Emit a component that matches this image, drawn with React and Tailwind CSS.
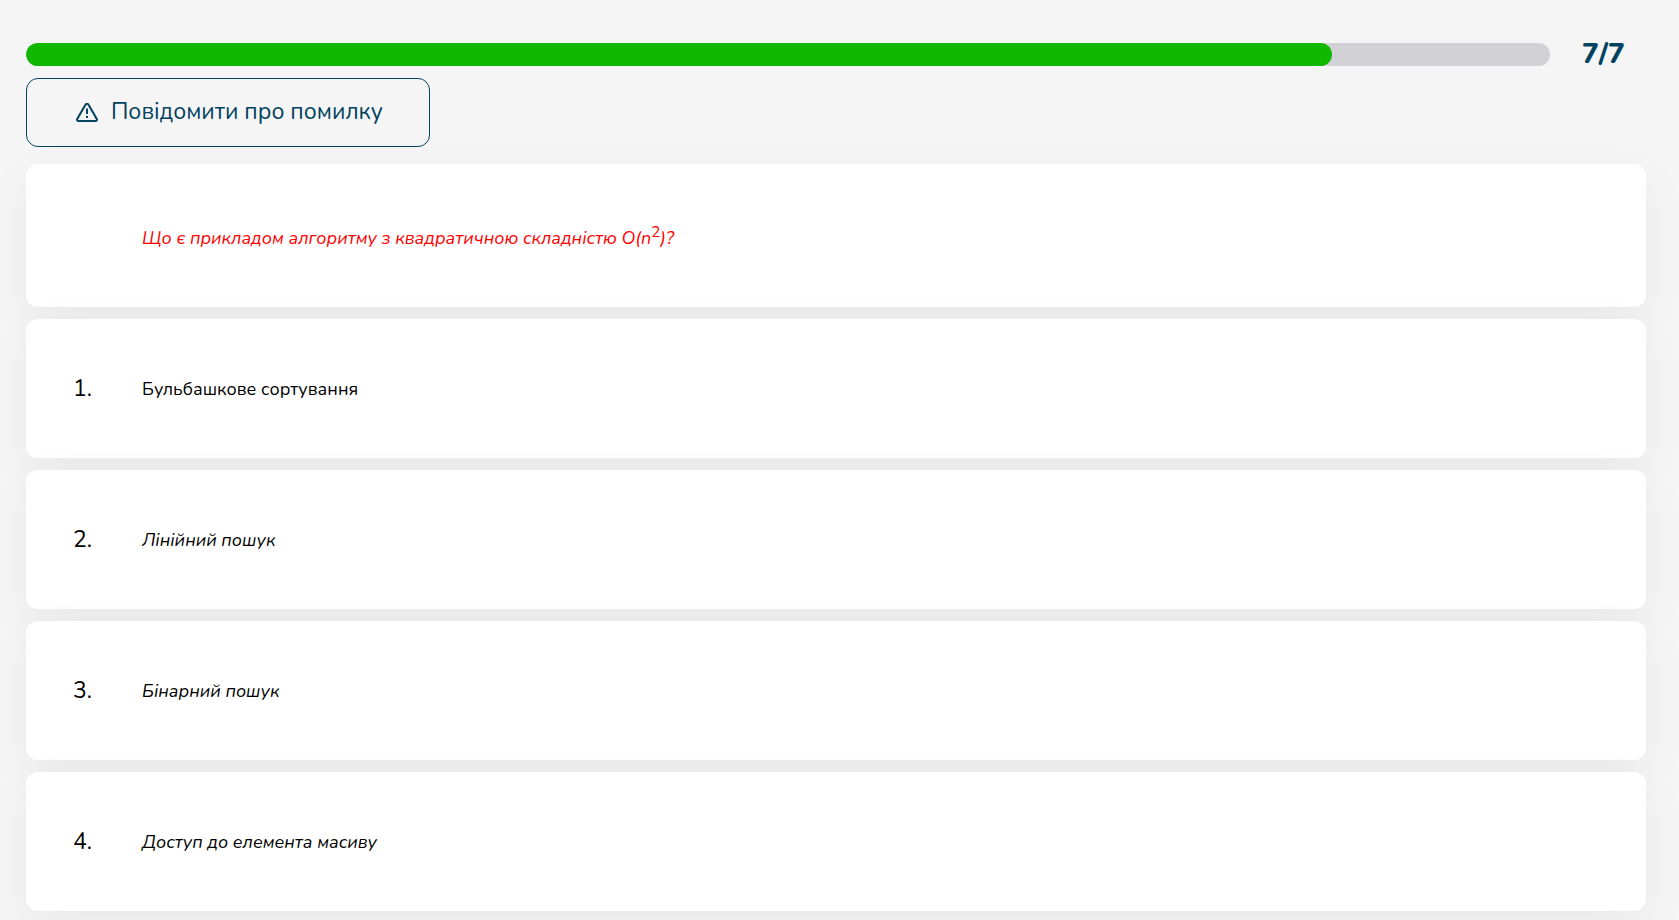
const answers = [
  { text: 'Бульбашкове сортування', italic: false },
  { text: 'Лінійний пошук', italic: true },
  { text: 'Бінарний пошук', italic: true },
  { text: 'Доступ до елемента масиву', italic: true },
];

const current = 7;
const total = 7;
const completed = 6;

function WarningIcon() {
  return (
    <svg
      className="h-5 w-6 shrink-0"
      viewBox="0 0 24 20"
      fill="none"
      stroke="currentColor"
      strokeWidth="2"
      strokeLinejoin="round"
      aria-hidden="true"
    >
      <path d="M10.6 1.6 2.2 15.9a1.4 1.4 0 0 0 1.2 2.1h17.2a1.4 1.4 0 0 0 1.2-2.1L13.4 1.6a1.6 1.6 0 0 0-2.8 0z" />
      <path d="M12 5.5v5.5" />
      <path d="M12 13v2" />
    </svg>
  );
}

function Card({ number, children }) {
  return (
    <div className="flex items-center rounded-xl bg-white py-[55px] pr-12 shadow-[0_15px_50px_rgba(0,0,0,0.05)]">
      <div className="w-[116px] shrink-0 pl-[47px] text-[23px] leading-[27px]">{number}</div>
      <div className="min-w-0 grow text-lg leading-[27px]">{children}</div>
    </div>
  );
}

export default function App() {
  return (
    <main className="min-h-screen overflow-hidden bg-[#f5f5f5] pt-10 pr-[33px] pb-2 pl-[26px] font-['Nunito','Open_Sans',sans-serif] text-black">
      <div className="flex items-center">
        <div
          className="h-[23px] grow overflow-hidden rounded-full bg-[#d2d1d6]"
          role="progressbar"
          aria-label={`${completed}/${total}`}
          aria-valuenow={completed}
          aria-valuemin={0}
          aria-valuemax={total}
        >
          <div
            className="h-full rounded-full bg-[#10b800]"
            style={{ width: `${(completed / total) * 100}%` }}
          />
        </div>
        <div className="w-24 shrink-0 pl-8 text-[28px] leading-7 font-extrabold text-[#00425f]">
          {current}/{total}
        </div>
      </div>

      <button
        type="button"
        className="mt-2.5 flex h-[69px] items-center gap-3 rounded-xl border border-[#00425f] pr-[46px] pl-12 text-[23px] text-[#00425f]"
      >
        <WarningIcon />
        Повідомити про помилку
      </button>

      <section className="mt-[17px] flex flex-col gap-3">
        <Card>
          <p className="pt-1.5 text-[#ff0000] italic">
            Що є прикладом алгоритму з квадратичною складністю O(n
            <sup className="text-[15px] not-italic">2</sup>)?
          </p>
        </Card>
        {answers.map((answer, index) => (
          <Card key={answer.text} number={`${index + 1}.`}>
            <p className={answer.italic ? 'pt-0.5 italic' : 'pt-0.5'}>{answer.text}</p>
          </Card>
        ))}
      </section>
    </main>
  );
}
